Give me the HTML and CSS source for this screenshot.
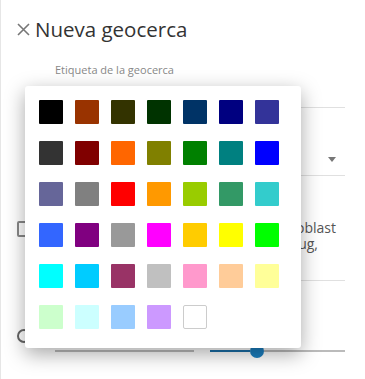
FILE: index.html
```html
<!DOCTYPE html>
<html lang="es">
<head>
  <meta charset="UTF-8">
  <meta name="viewport" content="width=device-width, initial-scale=1.0">
  <title>Nueva geocerca</title>
  <link rel="stylesheet" href="styles.css">
</head>
<body>
  <div class="panel">
    <div class="cabecera">
      <svg class="cerrar" width="13" height="13" viewBox="0 0 13 13">
        <path d="M1 1 L12 12 M12 1 L1 12" stroke="#777" stroke-width="1.6" fill="none"/>
      </svg>
      <h1 class="titulo">Nueva geocerca</h1>
    </div>

    <div class="formulario">
      <div class="campo">
        <label class="etiqueta">Etiqueta de la geocerca</label>
        <div class="entrada"></div>
      </div>

      <div class="campo-select">
        <span class="flecha"></span>
      </div>

      <div class="fila-check">
        <span class="check"></span>
        <div class="texto-check">
          <div class="linea">Restringir a la región Moscow oblast</div>
          <div class="linea l2">Distrito Federal del Yug,</div>
        </div>
      </div>

      <div class="separador"></div>

      <div class="fila-slider">
        <span class="radio"></span>
        <div class="pista-gris corta"></div>
        <div class="slider">
          <div class="pista-azul"></div>
          <span class="perilla"></span>
          <div class="pista-gris larga"></div>
        </div>
      </div>
    </div>

    <div class="paleta" id="paleta"></div>
  </div>

<script>
  const colores = [
    "#000000", "#993300", "#333300", "#003300", "#003366", "#000080", "#333399",
    "#333333", "#800000", "#ff6600", "#808000", "#008000", "#008080", "#0000ff",
    "#666699", "#808080", "#ff0000", "#ff9900", "#99cc00", "#339966", "#33cccc",
    "#3366ff", "#800080", "#999999", "#ff00ff", "#ffcc00", "#ffff00", "#00ff00",
    "#00ffff", "#00ccff", "#993366", "#c0c0c0", "#ff99cc", "#ffcc99", "#ffff99",
    "#ccffcc", "#ccffff", "#99ccff", "#cc99ff", "#ffffff"
  ];

  const paleta = document.getElementById("paleta");
  colores.forEach(c => {
    const div = document.createElement("div");
    div.className = c === "#ffffff" ? "color blanco" : "color";
    div.style.background = c;
    paleta.appendChild(div);
  });
</script>
</body>
</html>
```

FILE: styles.css
```css
body {
  margin: 0;
  font-family: "Open Sans", Arial, sans-serif;
  background-color: white;
  color: #333;
}

.panel {
  position: relative;
  height: 379px;
  border-left: 1px solid #e6e6e6;
  overflow: hidden;
}

.cabecera {
  display: flex;
  align-items: center;
  gap: 5px;
  padding: 15px 0 0 16px;
}

.titulo {
  margin: 0;
  font-size: 20.5px;
  font-weight: 400;
  color: #333;
  line-height: 28px;
}

.formulario {
  padding: 0 20px 0 24px;
}

.campo {
  padding-top: 20px;
}

.etiqueta {
  display: block;
  padding-left: 30px;
  font-size: 11px;
  color: #888;
  line-height: 14px;
}

.entrada {
  height: 30px;
  border-bottom: 1px solid #e0e0e0;
}

.campo-select {
  position: relative;
  height: 67px;
  border-bottom: 1px solid #e0e0e0;
}

.flecha {
  position: absolute;
  right: 9px;
  top: 49px;
  border-left: 4px solid transparent;
  border-right: 4px solid transparent;
  border-top: 5px solid #777;
}

.fila-check {
  display: flex;
  gap: 8px;
  padding-top: 44px;
  height: 60px;
}

.check {
  width: 10px;
  height: 12px;
  border: 2px solid #888;
  border-radius: 2px;
  margin-top: 1px;
  margin-left: -8px;
}

.texto-check {
  flex: 1;
  padding-right: 9px;
  text-align: right;
  font-size: 14px;
  color: #555;
  line-height: 16px;
}

.linea {
  white-space: nowrap;
}

.l2 {
  margin-right: 18px;
}

.separador {
  border-bottom: 1px solid #e0e0e0;
}

.fila-slider {
  display: flex;
  align-items: center;
  padding-top: 63px;
}

.radio {
  width: 10px;
  height: 10px;
  border: 2px solid #666;
  border-radius: 50%;
  margin-left: -8px;
  margin-top: -30px;
}

.pista-gris {
  height: 2px;
  background: #bbb;
}

.corta {
  width: 139px;
  margin-left: 24px;
}

.slider {
  display: flex;
  align-items: center;
  flex: 1;
  margin-left: 16px;
}

.pista-azul {
  width: 40px;
  height: 2px;
  background: #1a6fa8;
}

.perilla {
  width: 14px;
  height: 14px;
  border-radius: 50%;
  background: #1b7fc0;
}

.larga {
  flex: 1;
}

.paleta {
  position: absolute;
  left: 24px;
  top: 86px;
  width: 240px;
  display: grid;
  grid-template-columns: repeat(7, 24px);
  gap: 17px 12px;
  padding: 14px 22px 19px 14px;
  background: white;
  border-radius: 3px;
  box-shadow: 0 6px 20px rgba(0, 0, 0, 0.35);
}

.color {
  width: 24px;
  height: 24px;
  border-radius: 1px;
}

.blanco {
  width: 22px;
  height: 22px;
  border: 1px solid #ccc;
  border-radius: 2px;
}
```
